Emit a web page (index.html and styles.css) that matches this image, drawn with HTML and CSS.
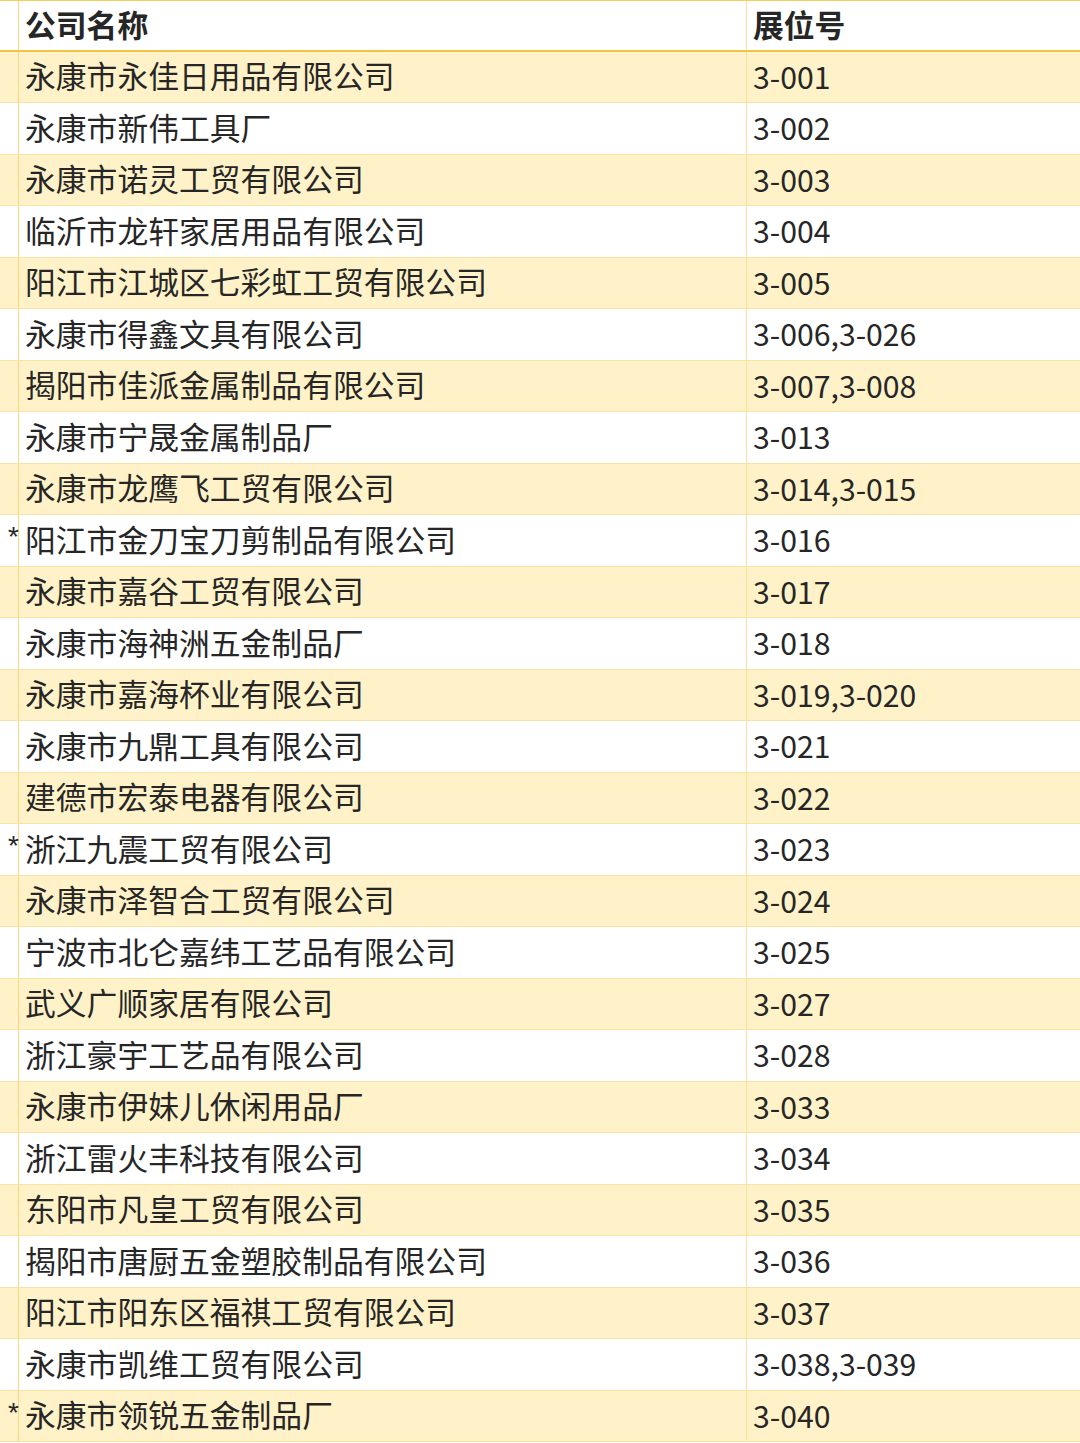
FILE: index.html
```html
<!DOCTYPE html>
<html lang="zh-CN">
<head>
<meta charset="utf-8">
<link rel="stylesheet" href="styles.css">
</head>
<body>
<div class="table">
  <div class="row head"><div class="mark"></div><div class="name">公司名称</div><div class="booth">展位号</div></div>
  <div class="row y"><div class="mark"></div><div class="name">永康市永佳日用品有限公司</div><div class="booth">3-001</div></div>
  <div class="row"><div class="mark"></div><div class="name">永康市新伟工具厂</div><div class="booth">3-002</div></div>
  <div class="row y"><div class="mark"></div><div class="name">永康市诺灵工贸有限公司</div><div class="booth">3-003</div></div>
  <div class="row"><div class="mark"></div><div class="name">临沂市龙轩家居用品有限公司</div><div class="booth">3-004</div></div>
  <div class="row y"><div class="mark"></div><div class="name">阳江市江城区七彩虹工贸有限公司</div><div class="booth">3-005</div></div>
  <div class="row"><div class="mark"></div><div class="name">永康市得鑫文具有限公司</div><div class="booth">3-006,3-026</div></div>
  <div class="row y"><div class="mark"></div><div class="name">揭阳市佳派金属制品有限公司</div><div class="booth">3-007,3-008</div></div>
  <div class="row"><div class="mark"></div><div class="name">永康市宁晟金属制品厂</div><div class="booth">3-013</div></div>
  <div class="row y"><div class="mark"></div><div class="name">永康市龙鹰飞工贸有限公司</div><div class="booth">3-014,3-015</div></div>
  <div class="row"><div class="mark">*</div><div class="name">阳江市金刀宝刀剪制品有限公司</div><div class="booth">3-016</div></div>
  <div class="row y"><div class="mark"></div><div class="name">永康市嘉谷工贸有限公司</div><div class="booth">3-017</div></div>
  <div class="row"><div class="mark"></div><div class="name">永康市海神洲五金制品厂</div><div class="booth">3-018</div></div>
  <div class="row y"><div class="mark"></div><div class="name">永康市嘉海杯业有限公司</div><div class="booth">3-019,3-020</div></div>
  <div class="row"><div class="mark"></div><div class="name">永康市九鼎工具有限公司</div><div class="booth">3-021</div></div>
  <div class="row y"><div class="mark"></div><div class="name">建德市宏泰电器有限公司</div><div class="booth">3-022</div></div>
  <div class="row"><div class="mark">*</div><div class="name">浙江九震工贸有限公司</div><div class="booth">3-023</div></div>
  <div class="row y"><div class="mark"></div><div class="name">永康市泽智合工贸有限公司</div><div class="booth">3-024</div></div>
  <div class="row"><div class="mark"></div><div class="name">宁波市北仑嘉纬工艺品有限公司</div><div class="booth">3-025</div></div>
  <div class="row y"><div class="mark"></div><div class="name">武义广顺家居有限公司</div><div class="booth">3-027</div></div>
  <div class="row"><div class="mark"></div><div class="name">浙江豪宇工艺品有限公司</div><div class="booth">3-028</div></div>
  <div class="row y"><div class="mark"></div><div class="name">永康市伊妹儿休闲用品厂</div><div class="booth">3-033</div></div>
  <div class="row"><div class="mark"></div><div class="name">浙江雷火丰科技有限公司</div><div class="booth">3-034</div></div>
  <div class="row y"><div class="mark"></div><div class="name">东阳市凡皇工贸有限公司</div><div class="booth">3-035</div></div>
  <div class="row"><div class="mark"></div><div class="name">揭阳市唐厨五金塑胶制品有限公司</div><div class="booth">3-036</div></div>
  <div class="row y"><div class="mark"></div><div class="name">阳江市阳东区福祺工贸有限公司</div><div class="booth">3-037</div></div>
  <div class="row"><div class="mark"></div><div class="name">永康市凯维工贸有限公司</div><div class="booth">3-038,3-039</div></div>
  <div class="row y"><div class="mark">*</div><div class="name">永康市领锐五金制品厂</div><div class="booth">3-040</div></div>
</div>
</body>
</html>
```

FILE: styles.css
```css
html, body {
  margin: 0;
  padding: 0;
  background: #ffffff;
}
body {
  font-family: "Noto Sans CJK SC", "Noto Sans", sans-serif;
  color: #262626;
  width: 1080px;
  overflow: hidden;
}
.table {
  display: flex;
  flex-direction: column;
}
.row {
  display: grid;
  grid-template-columns: 19px 728px 1fr;
  height: 51.5px;
  box-sizing: border-box;
  border-bottom: 1px solid #f9e3a4;
  background: #ffffff;
}
.row.y {
  background: #fff2c8;
}
.row.head {
  border-top: 1px solid #f6cf5a;
  border-bottom: 2px solid #f3c443;
  height: 51.5px;
}
.row > div {
  display: flex;
  align-items: center;
  font-size: 30.8px;
  line-height: 1;
  white-space: nowrap;
}
.mark {
  border-right: 1px solid #f7d87c;
  justify-content: flex-start;
  align-items: flex-start !important;
  padding-top: 8px;
  padding-left: 8px;
  font-size: 28px !important;
  font-family: "Liberation Sans", sans-serif;
  box-sizing: border-box;
}
.name {
  border-right: 1px solid #f9e1a0;
  padding-left: 6px;
  padding-bottom: 2px;
}
.booth {
  padding-left: 6px;
  padding-bottom: 2px;
  font-size: 30.2px !important;
}
.head .name, .head .booth {
  font-weight: 700;
}
.head .booth {
  font-size: 30.8px !important;
}
```
